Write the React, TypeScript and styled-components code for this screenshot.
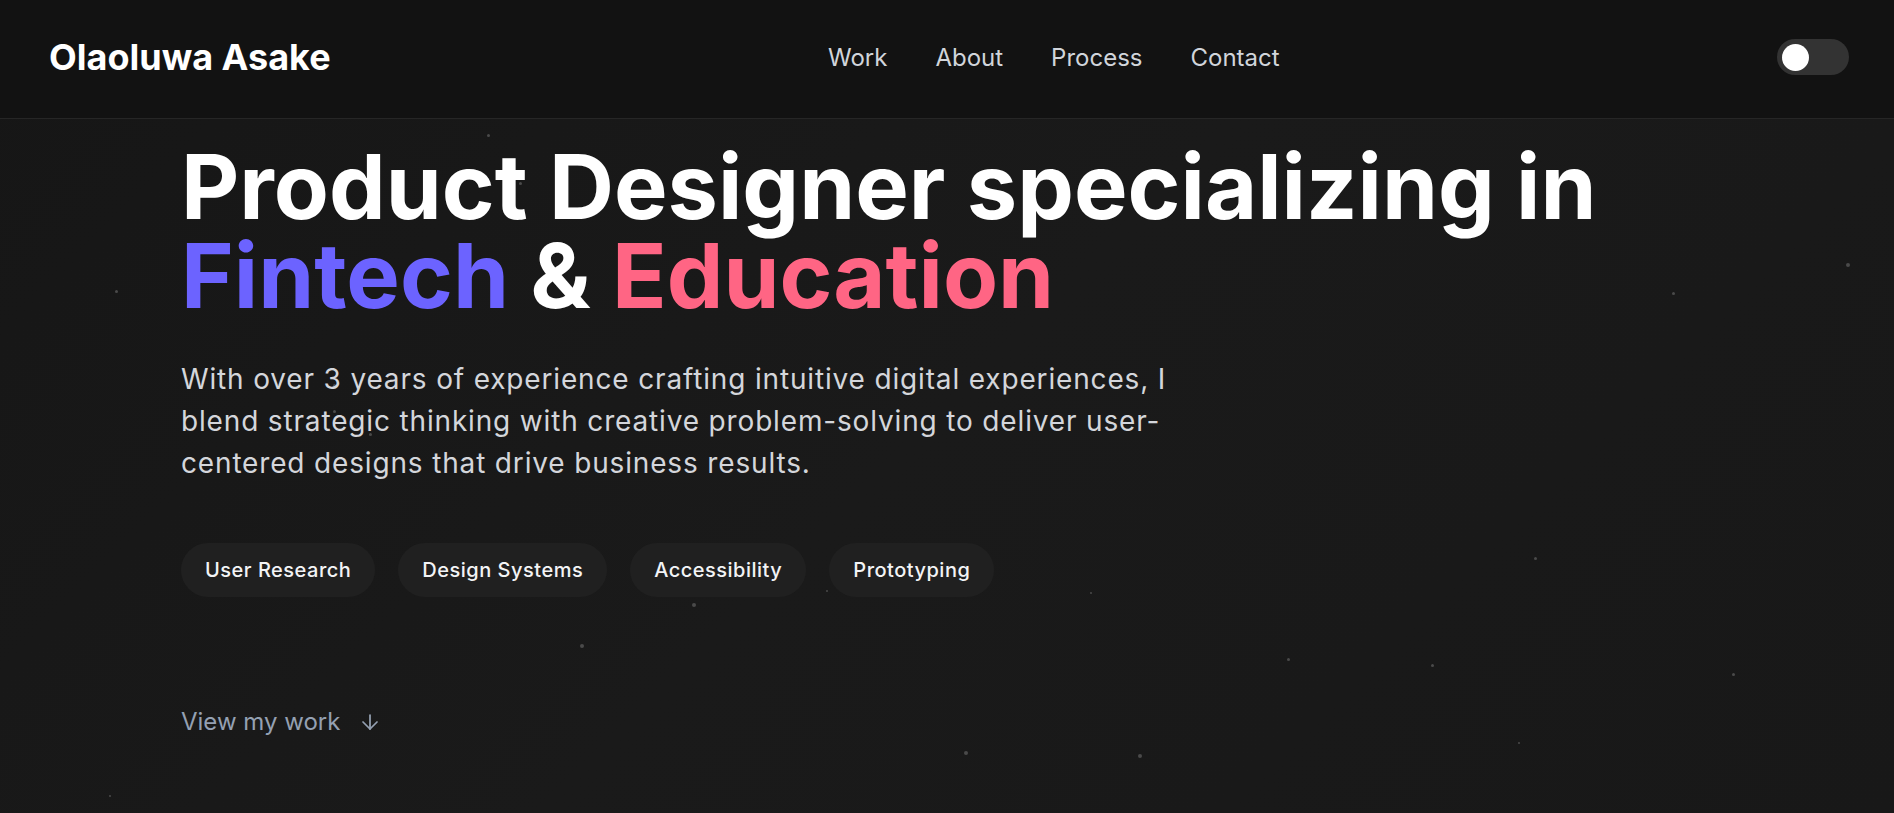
import React from "react";
import styled, { createGlobalStyle } from "styled-components";

const GlobalStyle = createGlobalStyle`
  html, body {
    margin: 0;
    padding: 0;
    background: #181818;
  }
  body {
    font-family: Inter, "Noto Sans", sans-serif;
    -webkit-font-smoothing: antialiased;
  }
  * { box-sizing: border-box; }
`;

const Page = styled.div`
  position: relative;
  min-height: 100vh;
  overflow: hidden;
  background: linear-gradient(135deg, #161616 0%, #1a1a1a 50%, #181818 100%);
  color: #ffffff;
`;

const Header = styled.header`
  position: relative;
  z-index: 2;
  height: 119px;
  display: flex;
  align-items: center;
  justify-content: space-between;
  padding: 0 45px 4px 49px;
  background: #121212;
  border-bottom: 1px solid #262626;
`;

const Logo = styled.a`
  font-size: 36px;
  font-weight: 700;
  color: #ffffff;
  text-decoration: none;
`;

const Nav = styled.nav`
  display: flex;
  align-items: center;
  gap: 48px;
`;

const NavLink = styled.a`
  font-size: 24px;
  font-weight: 400;
  color: #d1d5db;
  text-decoration: none;
`;

const Toggle = styled.button`
  width: 72px;
  height: 36px;
  border: none;
  border-radius: 18px;
  background: #333333;
  padding: 0 5px;
  display: flex;
  align-items: center;
  cursor: pointer;
`;

const Knob = styled.span`
  width: 27px;
  height: 27px;
  border-radius: 50%;
  background: #ffffff;
`;

const Hero = styled.main`
  position: relative;
  z-index: 1;
  max-width: 1532px;
  margin: 0 auto;
  padding-top: 23px;
`;

const Title = styled.h1`
  margin: 0;
  font-size: 90px;
  line-height: 89px;
  font-weight: 700;
  color: #ffffff;
`;

const Accent = styled.span<{ $color: string }>`
  color: ${(p) => p.$color};
`;

const Lead = styled.p`
  margin: 38px 0 0;
  max-width: 1005px;
  font-size: 28px;
  line-height: 42px;
  letter-spacing: 0.03em;
  color: #d4d6db;
`;

const Tags = styled.div`
  display: flex;
  gap: 23px;
  margin-top: 59px;
`;

const Tag = styled.span`
  display: inline-flex;
  align-items: center;
  height: 54px;
  padding: 0 24px;
  border-radius: 27px;
  background: #202020;
  font-size: 20px;
  font-weight: 500;
  letter-spacing: 0.025em;
  color: #f3f4f6;
`;

const ViewLink = styled.a`
  display: inline-flex;
  align-items: center;
  gap: 18px;
  margin-top: 107px;
  font-size: 24px;
  line-height: 36px;
  color: #94a0b2;
  text-decoration: none;
`;

const Star = styled.span<{ $size: number }>`
  position: absolute;
  width: ${(p) => p.$size}px;
  height: ${(p) => p.$size}px;
  border-radius: 50%;
  background: #4a4a4a;
  z-index: 0;
`;

const stars: [number, number, number][] = [
  [487, 134, 3],
  [115, 290, 3],
  [1846, 263, 4],
  [1672, 292, 3],
  [1534, 557, 3],
  [692, 603, 4],
  [826, 590, 2],
  [1090, 592, 2],
  [580, 644, 4],
  [1287, 658, 3],
  [1431, 664, 3],
  [1732, 673, 3],
  [1518, 742, 2],
  [964, 751, 4],
  [1138, 754, 4],
  [109, 795, 2],
  [519, 182, 3],
  [333, 384, 3],
  [333, 410, 3],
  [369, 433, 3],
];

export default function App() {
  return (
    <>
      <GlobalStyle />
      <Page>
        {stars.map(([x, y, s], i) => (
          <Star key={i} $size={s} style={{ left: x, top: y }} />
        ))}
        <Header>
          <Logo href="#">Olaoluwa Asake</Logo>
          <Nav>
            <NavLink href="#work">Work</NavLink>
            <NavLink href="#about">About</NavLink>
            <NavLink href="#process">Process</NavLink>
            <NavLink href="#contact">Contact</NavLink>
          </Nav>
          <Toggle aria-label="Toggle theme">
            <Knob />
          </Toggle>
        </Header>
        <Hero>
          <Title>
            Product Designer specializing in
            <br />
            <Accent $color="#6c63ff">Fintech</Accent> &amp;{" "}
            <Accent $color="#ff6584">Education</Accent>
          </Title>
          <Lead>
            With over 3 years of experience crafting intuitive digital
            experiences, I blend strategic thinking with creative
            problem-solving to deliver user-centered designs that drive
            business results.
          </Lead>
          <Tags>
            <Tag>User Research</Tag>
            <Tag>Design Systems</Tag>
            <Tag>Accessibility</Tag>
            <Tag>Prototyping</Tag>
          </Tags>
          <ViewLink href="#work">
            View my work
            <svg
              width="24"
              height="24"
              viewBox="0 0 24 24"
              fill="none"
              stroke="currentColor"
              strokeWidth="1.75"
              strokeLinecap="round"
              strokeLinejoin="round"
            >
              <path d="M12 5v14" />
              <path d="M19 12l-7 7-7-7" />
            </svg>
          </ViewLink>
        </Hero>
      </Page>
    </>
  );
}
